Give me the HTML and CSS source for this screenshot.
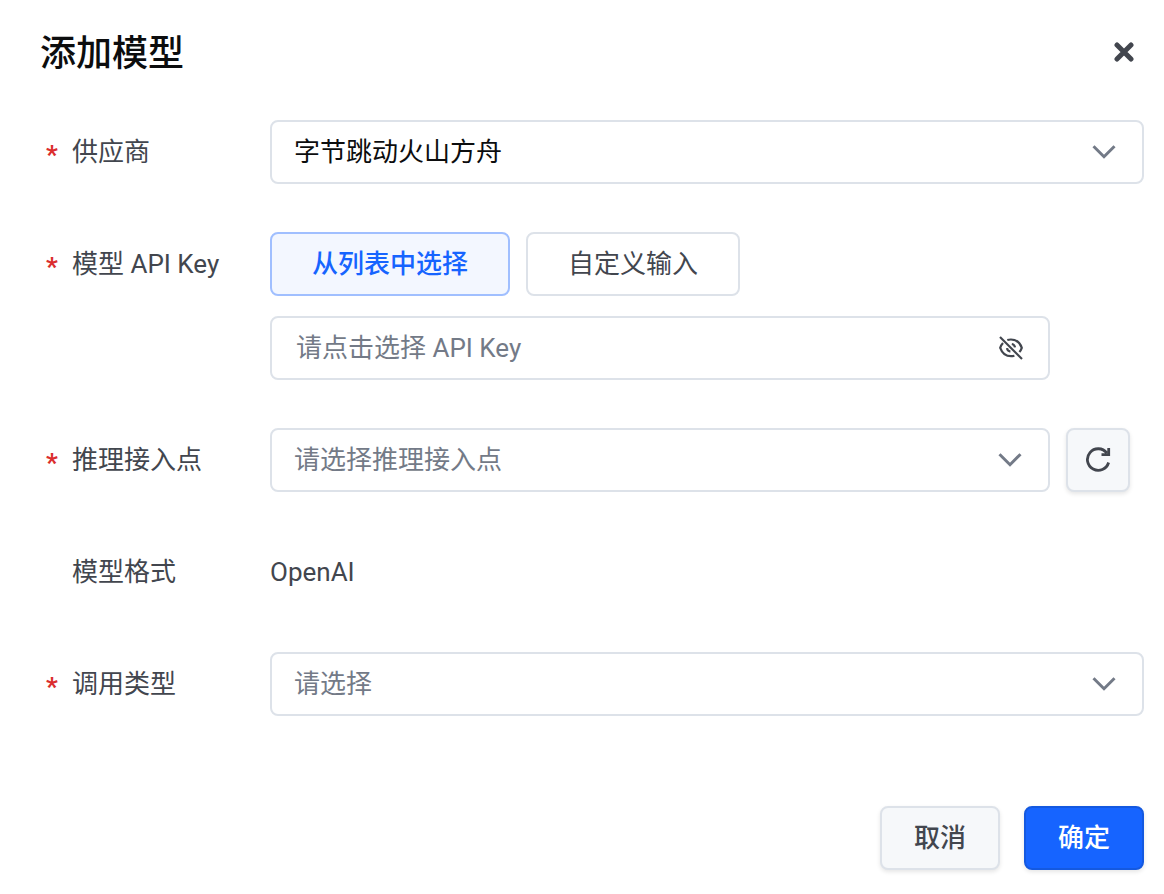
FILE: index.html
```
<!DOCTYPE html>
<html lang="zh-CN">
<head>
    <meta charset="UTF-8">
    <meta name="viewport" content="width=device-width, initial-scale=1.0">
    <title>添加模型</title>
    <link rel="stylesheet" href="styles.css">
</head>
<body>

    <div class="dialog" role="dialog" aria-labelledby="dialog-title">
        <header class="dialog-header">
            <h1 id="dialog-title">添加模型</h1>
            <button type="button" class="close-button" aria-label="关闭">
                <svg width="20" height="20" viewBox="0 0 20 20"><path d="M3 3l14 14M17 3L3 17"/></svg>
            </button>
        </header>

        <form class="model-form">
            <div class="form-row">
                <label class="form-label" for="provider"><span class="required">*</span>供应商</label>
                <div class="select-box">
                    <select id="provider">
                        <option>字节跳动火山方舟</option>
                    </select>
                    <svg class="chevron" width="24" height="14" viewBox="0 0 24 14"><path d="M1.5 1.2L12 11.7 22.5 1.2"/></svg>
                </div>
            </div>

            <div class="form-row">
                <label class="form-label" for="api-key"><span class="required">*</span>模型 API Key</label>
                <div class="key-field">
                    <div class="tabs">
                        <button type="button" class="tab active">从列表中选择</button>
                        <button type="button" class="tab">自定义输入</button>
                    </div>
                    <div class="input-box">
                        <input type="text" id="api-key" placeholder="请点击选择 API Key">
                        <button type="button" class="eye-button" aria-label="显示密钥">
                            <svg width="24" height="24" viewBox="0 0 24 24">
                                <path d="M8.3 4A12 12 0 0 1 12 3.5c5.2 0 9 3.4 10.8 8.3a13 13 0 0 1-2.4 4.2M4 7A13 13 0 0 0 1.2 11.8C3 16.8 6.8 20.2 12 20.2c1.2 0 2.3-.2 3.4-.5"/>
                                <path d="M12.8 8a4 4 0 0 1 3.2 3.4M8 12.2a4 4 0 0 0 3.4 3.4"/>
                                <path d="M1 1l22 22"/>
                            </svg>
                        </button>
                    </div>
                </div>
            </div>

            <div class="form-row">
                <label class="form-label" for="endpoint"><span class="required">*</span>推理接入点</label>
                <div class="endpoint-field">
                    <div class="select-box">
                        <select id="endpoint" class="empty">
                            <option>请选择推理接入点</option>
                        </select>
                        <svg class="chevron" width="24" height="14" viewBox="0 0 24 14"><path d="M1.5 1.2L12 11.7 22.5 1.2"/></svg>
                    </div>
                    <button type="button" class="refresh-button" aria-label="刷新">
                        <svg width="26" height="26" viewBox="0 0 26 26"><path d="M23.6 15.5A10.8 10.8 0 1 1 21.8 6M23.7 1V7.6H16.5"/></svg>
                    </button>
                </div>
            </div>

            <div class="form-row">
                <span class="form-label optional">模型格式</span>
                <div class="form-text">OpenAI</div>
            </div>

            <div class="form-row">
                <label class="form-label" for="call-type"><span class="required">*</span>调用类型</label>
                <div class="select-box">
                    <select id="call-type" class="empty">
                        <option>请选择</option>
                    </select>
                    <svg class="chevron" width="24" height="14" viewBox="0 0 24 14"><path d="M1.5 1.2L12 11.7 22.5 1.2"/></svg>
                </div>
            </div>
        </form>

        <footer class="dialog-footer">
            <button type="button" class="btn">取消</button>
            <button type="button" class="btn primary">确定</button>
        </footer>
    </div>

</body>
</html>
```
FILE: styles.css
```
* {
    box-sizing: border-box;
}

body {
    margin: 0;
    background: #fff;
    color: #42464e;
    font-family: Roboto, "Noto Sans CJK SC", sans-serif;
    font-size: 26px;
    line-height: 40px;
}

button, input, select {
    font: inherit;
    color: inherit;
}

button {
    padding: 0;
    cursor: pointer;
}

svg {
    display: block;
    fill: none;
    stroke: currentColor;
}

.dialog {
    padding: 24px 20px;
}

/* Header */
.dialog-header {
    display: flex;
    justify-content: space-between;
    align-items: center;
    height: 56px;
    margin-bottom: 40px;
    padding-left: 20px;
}

.dialog-header h1 {
    margin: 0;
    padding-top: 4px;
    color: #0c0d0e;
    font-size: 36px;
    font-weight: 500;
}

.close-button {
    padding: 10px;
    border: none;
    background: none;
    color: #42464e;
}

.close-button svg {
    stroke-width: 5;
    stroke-linecap: round;
}

/* Form */
.model-form {
    display: flex;
    flex-direction: column;
    gap: 48px;
}

.form-row {
    display: grid;
    grid-template-columns: 250px 1fr;
    align-items: start;
}

.form-label {
    display: flex;
    align-items: center;
    height: 64px;
    padding-left: 26px;
}

.form-label.optional {
    padding-left: 52px;
}

.required {
    width: 26px;
    padding-top: 6px;
    color: #db2e2e;
    font-weight: 700;
}

.form-text {
    line-height: 64px;
}

.select-box {
    position: relative;
    flex: 1;
}

select, input {
    display: block;
    width: 100%;
    height: 64px;
    border: 2px solid #dde2e9;
    border-radius: 8px;
    background: #fff;
}

select {
    appearance: none;
    padding: 0 64px 0 22px;
    color: #0c0d0e;
}

select.empty, input::placeholder {
    color: #737a87;
    opacity: 1;
}

input {
    padding: 0 64px 0 24px;
}

.chevron {
    position: absolute;
    top: 25px;
    right: 28px;
    color: #737a87;
    stroke-width: 3;
    pointer-events: none;
}

.key-field {
    display: flex;
    flex-direction: column;
    gap: 20px;
}

.tabs, .endpoint-field {
    display: flex;
    gap: 16px;
}

.tab {
    height: 64px;
    padding: 0 40px;
    border: 2px solid #dde2e9;
    border-radius: 8px;
    background: #fff;
}

.tab.active {
    border-color: #a0bfff;
    background: #f3f7ff;
    color: #1664ff;
    font-weight: 500;
}

.input-box, .endpoint-field .select-box {
    position: relative;
    max-width: 780px;
}

.eye-button {
    position: absolute;
    top: 20px;
    right: 27px;
    border: none;
    background: none;
}

.eye-button svg {
    stroke-width: 2.2;
}

.refresh-button {
    display: flex;
    align-items: center;
    justify-content: center;
    width: 64px;
    height: 64px;
}

.refresh-button svg {
    stroke-width: 2.8;
}

.refresh-button, .btn {
    border: 2px solid #dde2e9;
    border-radius: 8px;
    background: #f6f8fa;
    box-shadow: 0 2px 4px rgba(0, 0, 0, 0.1);
}

/* Footer */
.dialog-footer {
    display: flex;
    justify-content: flex-end;
    gap: 24px;
    margin-top: 90px;
}

.btn {
    width: 120px;
    height: 64px;
    font-weight: 500;
}

.btn.primary {
    border-color: #1459e0;
    background: #1664ff;
    color: #fff;
}
```
